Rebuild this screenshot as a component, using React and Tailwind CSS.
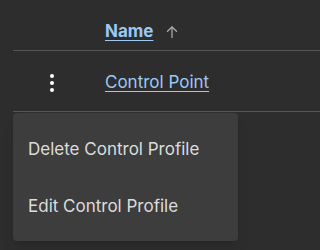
import React from 'react';

const font = { fontFamily: 'Inter, "Liberation Sans", sans-serif' };

const Kebab = () => (
  <div className="flex flex-col gap-[3px]">
    <span className="block w-[4px] h-[4px] rounded-full bg-white" />
    <span className="block w-[4px] h-[4px] rounded-full bg-white" />
    <span className="block w-[4px] h-[4px] rounded-full bg-white" />
  </div>
);

const SortUp = () => (
  <svg width="12" height="12" viewBox="0 0 12 12" fill="none" stroke="#a9a9a9" strokeWidth="1.3" strokeLinecap="round" strokeLinejoin="round">
    <path d="M6 11.5V1" />
    <path d="M1.5 5.3 6 1l4.5 4.3" />
  </svg>
);

const App = () => {
  return (
    <div className="relative w-full min-w-[258px] h-[250px] bg-[#2d2d2d] overflow-hidden" style={font}>
      <div className="ml-[13px]">
        <div className="flex items-center h-[51px] pt-[13px] border-b border-[#555555]">
          <div className="w-[92px]" />
          <a href="#" className="text-[17px] font-bold text-[#9cc8f5] underline underline-offset-[3px] decoration-[1px]">
            Name
          </a>
          <span className="ml-[13px] flex items-center">
            <SortUp />
          </span>
        </div>
        <div className="flex items-center h-[61px] pt-[3px] border-b border-[#555555]">
          <div className="w-[92px] pl-[37px]">
            <Kebab />
          </div>
          <a href="#" className="text-[17px] text-[#9cc8f5] underline underline-offset-[3px] decoration-[1px]">
            Control Point
          </a>
        </div>
      </div>

      <div className="absolute left-[13px] top-[113px] w-[225px] py-[7px] rounded-[4px] bg-[#3d3d3d] shadow-lg">
        <div className="flex items-center h-[57px] pt-[2px] px-[15px] text-[17px] text-[#dcdcdc]">Delete Control Profile</div>
        <div className="flex items-center h-[57px] pt-[2px] px-[15px] text-[17px] text-[#dcdcdc]">Edit Control Profile</div>
      </div>
    </div>
  );
};

export default App;
